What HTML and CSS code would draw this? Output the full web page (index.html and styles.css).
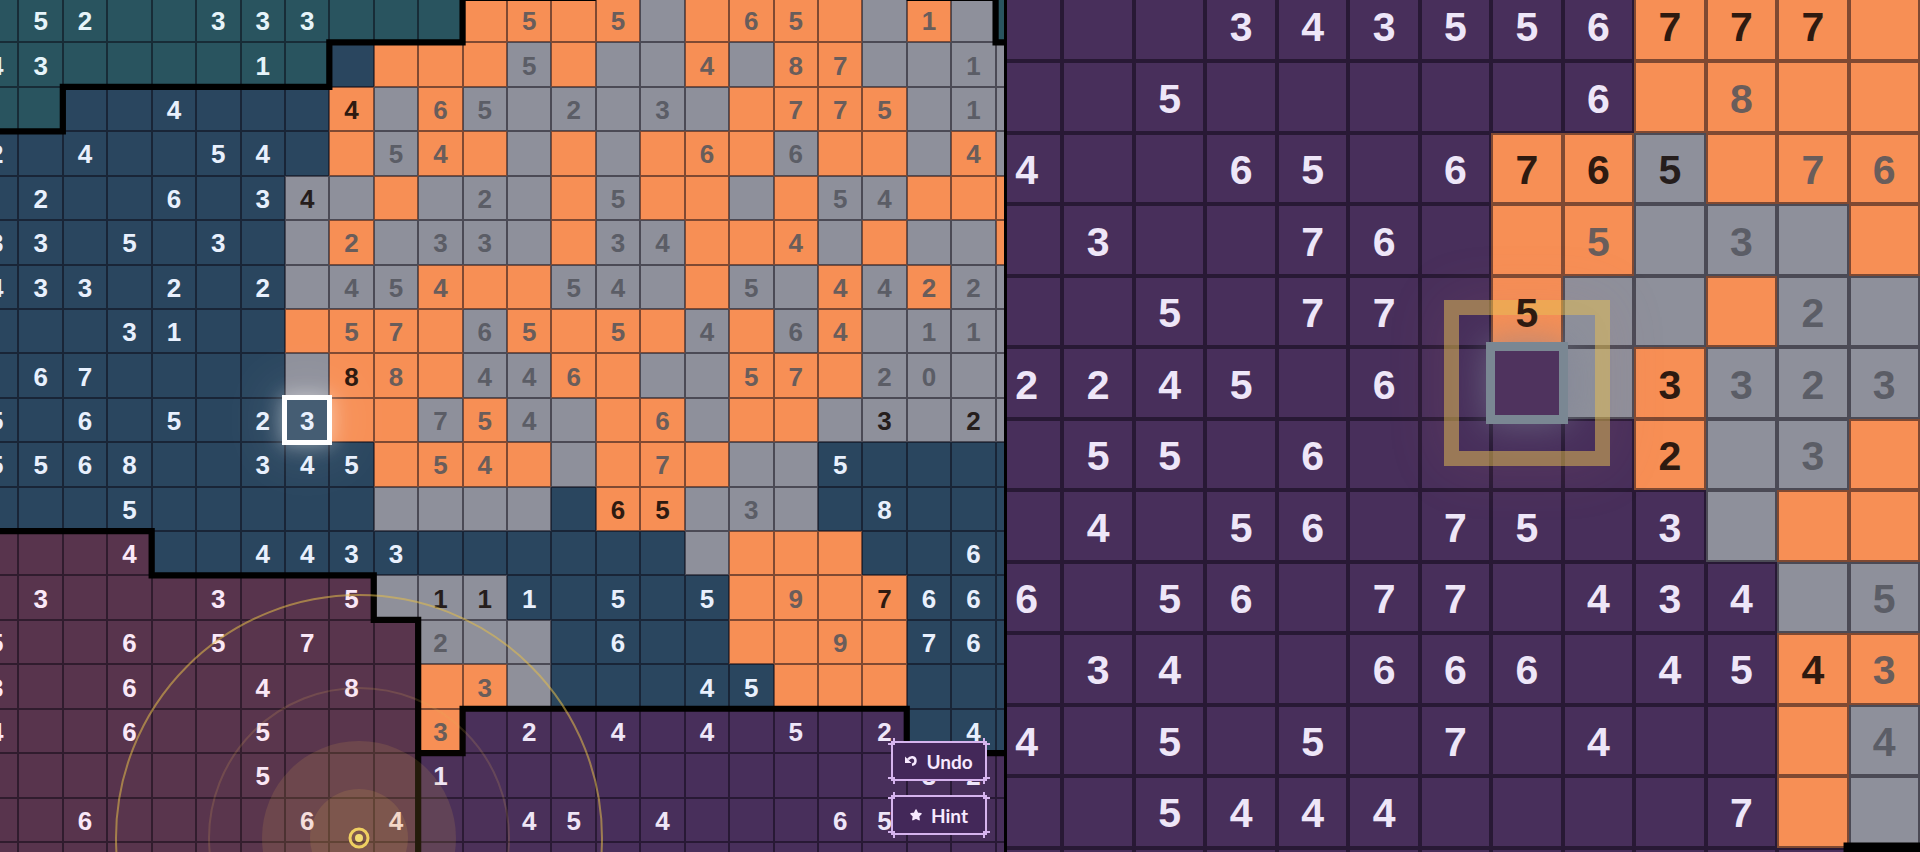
FILE: index.html
```html
<!DOCTYPE html>
<html lang="en">
	<head>
		<meta charset="UTF-8" />
		<meta name="viewport" content="width=device-width, initial-scale=1.0" />
		<title>infinite mines</title>
		<link rel="stylesheet" href="styles.css">
	</head>
	<body>
		<main class="views">
			<section class="view near">
				<div class="board" id="nearBoard">
					<svg class="regions" viewBox="0 0 24 20" preserveAspectRatio="none">
						<path d="M0 3H2V2H8V1H11V0H14M21 0H23V1H24" />
						<path d="M0 12H4V13H9V14H10V20M10 17H11V16H21V17H24" />
					</svg>
				</div>
				<svg class="ripple" viewBox="-250 -250 500 500">
					<circle class="wave" r="243" />
					<circle class="wave faint" r="150" />
					<circle class="halo" r="97" />
					<circle class="halo" r="49" />
					<circle class="ring" r="9" />
					<circle class="dot" r="4" />
				</svg>
				<div class="actions">
					<button type="button">
						<svg class="icon" viewBox="0 0 12 12"><path d="M0 1.500V8H6.500Z" /><path class="tail" d="M3 4.500Q5 2 7.500 2.300Q10.500 2.800 10.500 6Q10.300 9.300 7 9.800" /></svg>
						Undo
						<svg class="corner tl" viewBox="0 0 8 8"><path d="M6 0V6H0" /></svg>
						<svg class="corner tr" viewBox="0 0 8 8"><path d="M6 0V6H0" /></svg>
						<svg class="corner bl" viewBox="0 0 8 8"><path d="M6 0V6H0" /></svg>
						<svg class="corner br" viewBox="0 0 8 8"><path d="M6 0V6H0" /></svg>
					</button>
					<button type="button">
						<svg class="icon star" viewBox="0 0 12 12"><path d="M6 1L7.500 4.200L11 4.700L8.500 7.200L9.100 10.700L6 9.100L2.900 10.700L3.500 7.200L1 4.700L4.500 4.200Z" /></svg>
						Hint
						<svg class="corner tl" viewBox="0 0 8 8"><path d="M6 0V6H0" /></svg>
						<svg class="corner tr" viewBox="0 0 8 8"><path d="M6 0V6H0" /></svg>
						<svg class="corner bl" viewBox="0 0 8 8"><path d="M6 0V6H0" /></svg>
						<svg class="corner br" viewBox="0 0 8 8"><path d="M6 0V6H0" /></svg>
					</button>
				</div>
			</section>
			<section class="view far">
				<div class="board" id="farBoard">
					<svg class="regions" viewBox="0 0 13 13" preserveAspectRatio="none">
						<path d="M13 12H12V13" />
					</svg>
				</div>
			</section>
		</main>
		<script src="board.js"></script>
	</body>
</html>
```
FILE: styles.css
```css
body {
	margin: 0;
	background-color: black;
}
.views {
	display: flex;
	height: 100vh;
	overflow: hidden;
}
.view {
	position: relative;
	overflow: hidden;
	min-width: 0;
	box-sizing: border-box;
}
.near {
	flex: 1004 1004 0;
	border-right: 3px solid black;
	--line: 1px;
	--drop: 2px;
	font-size: 26px;
}
.far {
	flex: 913 913 0;
	--line: 2px;
	--drop: 4px;
	font-size: 41px;
}
.board {
	position: relative;
	isolation: isolate;
	display: grid;
	font-family: "Liberation Sans", sans-serif;
	font-weight: bold;
	line-height: 1;
}
#nearBoard {
	grid-template-columns: repeat(24, minmax(0, 1fr));
	margin: -2px -36px 0 -26px;
}
#farBoard {
	grid-template-columns: repeat(13, minmax(0, 1fr));
	margin: -10px 0 0 -16px;
}
.cell {
	display: flex;
	align-items: center;
	justify-content: center;
	box-sizing: border-box;
	aspect-ratio: 1;
	min-height: 0;
	padding-top: var(--drop);
	box-shadow: inset 0 0 0 var(--line) rgba(8, 4, 16, 0.5);
}
.number {
	position: relative;
	z-index: 2;
}
.teal {
	background-color: #29545f;
	color: #e6f4fa;
}
.navy {
	background-color: #2a465f;
	color: #e8f0fd;
}
.mauve {
	background-color: #58344d;
	color: #fae8f8;
}
.purple {
	background-color: #482f5b;
	color: #eee6f8;
}
.void {
	background-color: black;
}
.orange {
	background-color: #f78f55;
	color: #2e1a10;
}
.gray {
	background-color: #8e909b;
	color: #251d1c;
}
.orange.done {
	color: #695d5b;
}
.gray.done {
	color: #5b5d66;
}
.regions {
	position: absolute;
	inset: 0;
	width: 100%;
	height: 100%;
	overflow: visible;
	fill: none;
	stroke: black;
	stroke-width: 0.14;
}
.selected,
.target {
	position: relative;
}
.selected::after,
.target::before,
.target::after {
	content: "";
	position: absolute;
	z-index: 1;
}
.selected::after {
	inset: -3px;
	border: 5px solid white;
	background-color: rgba(255, 255, 255, 0.13);
	box-shadow: 0 0 20px rgba(255, 255, 255, 0.45), 0 0 60px 10px rgba(255, 255, 255, 0.12);
}
.target::before {
	inset: -5px;
	border: 9px solid #7a8793;
	background-color: rgba(110, 70, 110, 0.2);
	box-shadow: 0 0 36px rgba(125, 130, 150, 0.6);
}
.target::after {
	inset: -47px;
	border: 15px solid rgba(231, 190, 84, 0.52);
	box-shadow: 0 0 60px rgba(190, 110, 120, 0.14);
}
.ripple {
	position: absolute;
	left: 109px;
	bottom: -236px;
	width: 500px;
	height: 500px;
}
.wave {
	fill: rgba(240, 190, 70, 0.01);
	stroke: rgba(228, 190, 75, 0.55);
	stroke-width: 2;
}
.faint {
	stroke: rgba(225, 175, 90, 0.18);
}
.halo {
	fill: rgba(225, 180, 75, 0.14);
}
.ring {
	fill: none;
	stroke: #efcf61;
	stroke-width: 3;
}
.dot {
	fill: #f3dc72;
}
.actions {
	position: absolute;
	right: 17px;
	bottom: 17px;
	z-index: 2;
	display: flex;
	flex-direction: column;
	gap: 14px;
}
button {
	position: relative;
	display: flex;
	align-items: center;
	justify-content: center;
	gap: 9px;
	width: 96px;
	height: 40px;
	padding: 0;
	border: 2px solid #d6b4ee;
	background-color: #432859;
	color: #f7e9ff;
	font: bold 19px Lato, sans-serif;
	cursor: pointer;
}
.icon {
	width: 12px;
	height: 12px;
	fill: currentColor;
}
.tail {
	fill: none;
	stroke: currentColor;
	stroke-width: 2.5;
}
.star {
	stroke: currentColor;
	stroke-width: 1.5;
	stroke-linejoin: round;
}
.corner {
	position: absolute;
	width: 8px;
	height: 8px;
	fill: none;
	stroke: #d6b4ee;
	stroke-width: 2;
}
.tl {
	top: -5px;
	left: -5px;
}
.tr {
	top: -5px;
	right: -5px;
	transform: scaleX(-1);
}
.bl {
	bottom: -5px;
	left: -5px;
	transform: scaleY(-1);
}
.br {
	right: -5px;
	bottom: -5px;
	transform: scale(-1);
}
```
FILE: board.js
```js
const colors = {
	T: "teal",
	N: "navy",
	M: "mauve",
	P: "purple",
	X: "void",
	O: "orange done",
	G: "gray done",
	// lowercase: number still has open neighbours
	o: "orange",
	g: "gray",
};

// each row: colours, then numbers
const near = [
	["TTTTTTTTTTTOOOOGOOOOGOGT", ".52..333....5.5..65..1.."],
	["TTTTTTTTNOOOGOGGOGOOGGGG", "43....1.....5...4.87..1."],
	["TTNNNNNNoGOGGGGGGOOOOGGG", "....4...4.65.2.3..775.1."],
	["NNNNNNNNOGOOGOGOOOGOOGOG", "2.4..54..54.....6.6...4."],
	["NNNNNNNgGOGGGOGOOGOGGOOO", ".2..6.34...2..5....54..."],
	["NNNNNNNGOGGGGOGGOOOGOGGO", "33.5.3..2.33..34..4....."],
	["NNNNNNNGGGOOOGGGOGGOGOGG", "433.2.2.454..54..5.4422."],
	["NNNNNNNOOOOGOOOOGOGOGGGG", "...31...57.65.5.4.64.11."],
	["NNNNNNNGoOOGGOOGGOOOGGGG", ".67.....88.446...57.20.."],
	["NNNNNNNNOOGOGGOOGOOGgGgG", "5.6.5.23..754..6....3.2."],
	["NNNNNNNNNOOOOGOOOGGNNNNN", "5568..345.54...7...5...."],
	["NNNNNNNNNGGGGNooGGGNNNNN", "...5..........65.3..8..."],
	["MMMMNNNNNNNNNNNNGOOONNNN", "...4..4433............6."],
	["MMMMMMMMMGggNNNNNOOOoNNN", ".3...3..5.111.5.5.9.766."],
	["MMMMMMMMMMGGGNNNNOOOONNN", "5..6.5.7..2...6....9.76."],
	["MMMMMMMMMMOOGNNNNNOOONNN", "3..6..4.8..3....45......"],
	["MMMMMMMMMMOPPPPPPPPPPNNN", "4..6..5...3.2.4.4.5.2.4."],
	["MMMMMMMMMMPPPPPPPPPPPPPP", "......5...1..........32."],
	["MMMMMMMMMMPPPPPPPPPPPPPP", "..6....6.4..45.4...65..."],
	["MMMMMMMMMMPPPPPPPPPPPPPP", "........................"],
];

const far = [
	["PPPPPPPPPoooO", "...343556777."],
	["PPPPPPPPPOOOO", "..5.....6.8.."],
	["PPPPPPPoogOOO", "4..65.6765.76"],
	["PPPPPPPOOGGGO", ".3..76..5.3.."],
	["PPPPPPPoGGOGG", "..5.77.5...2."],
	["PPPPPPPPGoGGG", "2245.6...3323"],
	["PPPPPPPPPoGGO", ".55.6....2.3."],
	["PPPPPPPPPPGOO", ".4.56.75.3..."],
	["PPPPPPPPPPPGG", "6.56.77.434.5"],
	["PPPPPPPPPPPoO", ".34..666.4543"],
	["PPPPPPPPPPPOG", "4.5.5.7.4...4"],
	["PPPPPPPPPPPOG", "..5444....7.."],
	["PPPPPPPPPPPPX", "............."],
];

function drawBoard(board, rows, marked, mark) {
	const cells = document.createDocumentFragment();
	rows.forEach(([row, numbers], y) => {
		[...row].forEach((color, x) => {
			const cell = document.createElement("div");
			cell.className = "cell " + colors[color];
			if (numbers[x] !== ".") {
				const number = document.createElement("span");
				number.className = "number";
				number.textContent = numbers[x];
				cell.append(number);
			}
			if (x === marked[0] && y === marked[1]) {
				cell.classList.add(mark);
			}
			cells.append(cell);
		});
	});
	board.prepend(cells);
}

drawBoard(nearBoard, near, [7, 9], "selected");
drawBoard(farBoard, far, [7, 5], "target");
```
